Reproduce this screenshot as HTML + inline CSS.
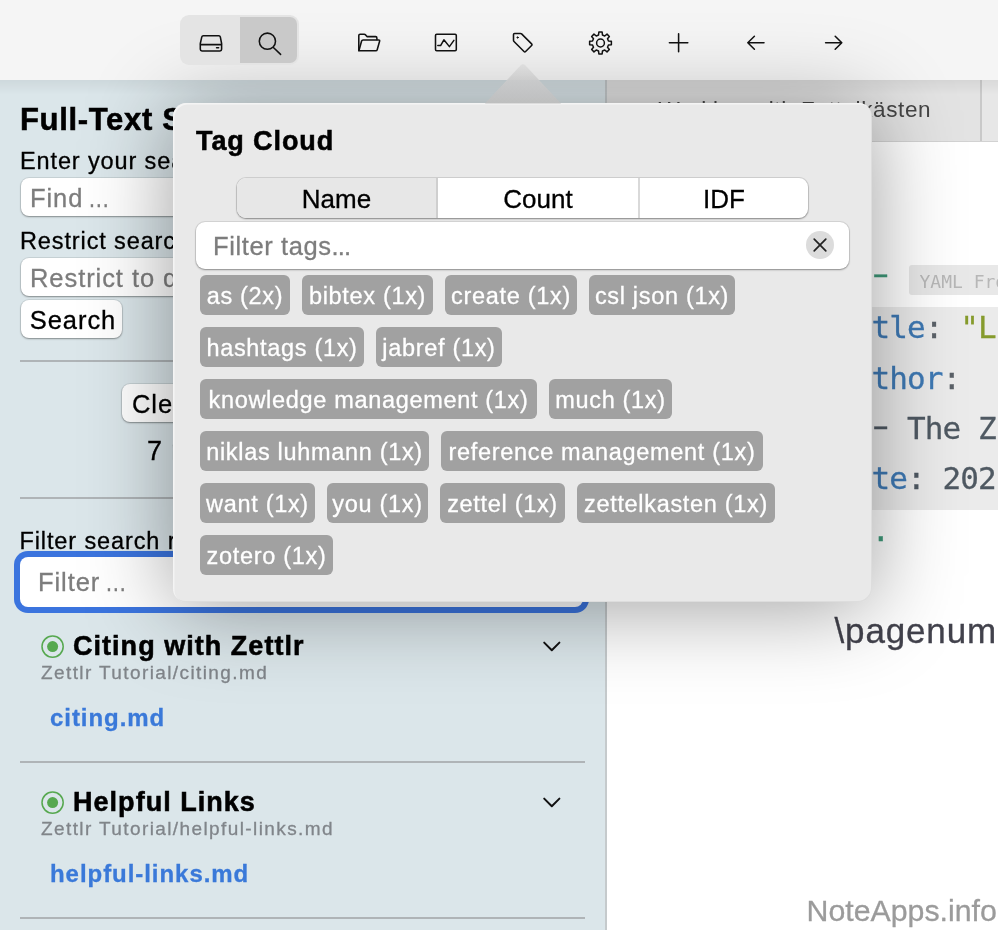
<!DOCTYPE html>
<html lang="en">
<head>
<meta charset="utf-8">
<title>Zettlr – Tag Cloud</title>
<style>
*{box-sizing:border-box;margin:0;padding:0}
html,body{width:998px;height:930px;overflow:hidden;background:#fff}
body{position:relative;-webkit-text-stroke:.3px;font-family:"Liberation Sans",sans-serif;color:#000;-webkit-font-smoothing:antialiased}
.abs{position:absolute;white-space:nowrap}
#toolbar,#sidebar,#tabbar,#editor,#pop{will-change:transform}
/* toolbar */
#toolbar{position:absolute;left:0;top:0;width:998px;height:80px;background:#f5f5f5;z-index:12;overflow:hidden}
#tbshadow{position:absolute;left:173px;top:103px;width:698.6px;height:499px;border-radius:13px;box-shadow:0 2px 88px 0 rgba(0,0,0,.29)}
#seg{position:absolute;left:180px;top:15px;width:118.6px;height:50px;border-radius:9px;background:#e4e4e4;overflow:hidden}
#seg .on{position:absolute;left:60px;top:2px;width:56.8px;height:46px;background:#c9c9c9;border-radius:0 7px 7px 0}
.ico{position:absolute;overflow:visible}
/* sidebar */
#sidebar{position:absolute;left:0;top:80px;width:607px;height:850px;background:#dbe6ea;border-right:2px solid #c5cacc}
#sideshadow{position:absolute;left:0;top:80px;width:998px;height:14px;background:linear-gradient(rgba(0,0,0,.06),rgba(0,0,0,0));z-index:4}
.inp{position:absolute;background:#fff;border-radius:8px;box-shadow:0 1px 2px rgba(0,0,0,.35),0 0 0 1px rgba(0,0,0,.08);color:#7d7d7d;font-size:25.5px;letter-spacing:.93px;white-space:nowrap;overflow:hidden}
.btn{position:absolute;background:#fff;border-radius:8px;box-shadow:0 1px 2px rgba(0,0,0,.35),0 0 0 1px rgba(0,0,0,.08);color:#000;font-size:25.5px;letter-spacing:.93px;white-space:nowrap;overflow:hidden}
.el{display:inline-block;transform:scaleX(.85);transform-origin:0 50%;margin-left:-3px}
.hr{position:absolute;height:2px;background:#afb4b7}
.lbl{position:absolute;font-size:23.5px;letter-spacing:.88px;white-space:nowrap}
.h1{position:absolute;-webkit-text-stroke:.55px;font-weight:bold;font-size:31px;letter-spacing:.67px;white-space:nowrap}
.res-t{position:absolute;-webkit-text-stroke:.55px;font-weight:bold;font-size:27px;letter-spacing:1.03px;white-space:nowrap}
.res-p{position:absolute;font-size:19px;letter-spacing:1.4px;color:#80858a;white-space:nowrap}
.res-f{position:absolute;font-weight:bold;font-size:24px;letter-spacing:.95px;color:#3a79d9;white-space:nowrap}
/* editor */
#tabbar{position:absolute;left:607px;top:80px;width:391px;height:62px;background:#e3e3e3;border-bottom:1.5px solid #d2d2d2}
#tabbar .r{position:absolute;left:373px;top:0;width:18px;height:61px;background:#e7e7e7;border-left:2px solid #c9c9c9}
#editor{position:absolute;left:607px;top:142px;width:391px;height:788px;background:#fff}
#editor .in{position:absolute;left:1px;top:0;width:390px;height:788px}
.mono{position:absolute;font-family:"DejaVu Sans Mono","Liberation Mono",monospace;font-size:31px;letter-spacing:-.9px;line-height:40px;white-space:pre;max-width:160px;overflow:hidden}
.dash{display:inline-block;transform:translate(-1px,-3.2px) scaleX(1.6);transform-origin:50% 50%}
/* popover */
#pop{position:absolute;left:173px;top:103px;width:698.6px;height:499px;background:#e9e9e9;border-radius:13.5px;box-shadow:inset 1.5px 1.5px 0 rgba(245,245,245,.9),inset -1px -1px 0 rgba(0,0,0,.05),0 5px 88px 0 rgba(0,0,0,.39);z-index:10}
#arrow{position:absolute;z-index:13}
.tag{position:absolute;height:40px;border-radius:6px;background:#a1a1a1;color:#fff;font-size:23.5px;letter-spacing:.68px;line-height:43px;text-align:center;white-space:nowrap}
</style>
</head>
<body>

<div id="toolbar">
  <div id="tbshadow"></div>
  <div id="seg"><div class="on"></div></div>
  <svg class="ico" style="left:0;top:0" width="998" height="80" viewBox="0 0 998 80" fill="none" stroke="#111" stroke-width="1.55" stroke-linecap="round" stroke-linejoin="round">
    <!-- drive -->
    <path d="M203.3 35.8 H218.9 Q220 35.8 220.3 36.9 L221.6 43.5 V49.3 Q221.6 50.9 220 50.9 H202 Q200.3 50.9 200.3 49.3 V43.5 L201.8 36.9 Q202.1 35.8 203.3 35.8Z"/>
    <path d="M200.8 44.6 H221.2" stroke-width="1.9"/>
    <path d="M216.6 47.8 H218.6" stroke-width="1.6"/>
    <!-- search -->
    <circle cx="267.4" cy="41.2" r="8.1"/>
    <path d="M273.4 47.5 L280.6 54.4"/>
    <!-- folder -->
    <path d="M358.8 50.6 V35.6 Q358.8 34.3 360.1 34.3 H364.2 Q365 34.3 365.6 34.9 L367 36.6 H375.6 Q376.9 36.6 376.9 37.9 V39.6"/>
    <path d="M358.9 50.7 L361.6 41 Q361.9 39.9 363.1 39.9 H378.6 Q380 39.9 379.6 41.2 L377.2 49.7 Q376.9 50.8 375.7 50.8 H359.4"/>
    <!-- chart -->
    <rect x="435.5" y="34.2" width="20.8" height="16.6" rx="1.2"/>
    <path d="M437.8 45.6 H440.6 L443.9 39.8 L449.4 46.6 L453.9 40.4" stroke-width="1.5"/>
    <!-- tag -->
    <path d="M514.6 33.4 H520.4 Q521.1 33.4 521.6 33.9 L531.6 43.9 Q532.4 44.7 531.6 45.5 L525.6 51.5 Q524.8 52.3 524 51.5 L514 41.5 Q513.5 41 513.5 40.3 V34.5 Q513.5 33.4 514.6 33.4Z"/>
    <circle cx="517.6" cy="37.5" r="0.7" fill="#111" stroke-width="0.8"/>
    <!-- gear -->
    <path d="M598.55 35.04 L598.86 32.12 L602.14 32.12 L602.45 35.04 L604.75 35.99 L607.03 34.15 L609.35 36.47 L607.51 38.75 L608.46 41.05 L611.38 41.36 L611.38 44.64 L608.46 44.95 L607.51 47.25 L609.35 49.53 L607.03 51.85 L604.75 50.01 L602.45 50.96 L602.14 53.88 L598.86 53.88 L598.55 50.96 L596.25 50.01 L593.97 51.85 L591.65 49.53 L593.49 47.25 L592.54 44.95 L589.62 44.64 L589.62 41.36 L592.54 41.05 L593.49 38.75 L591.65 36.47 L593.97 34.15 L596.25 35.99Z" stroke-width="1.5"/>
    <circle cx="600.5" cy="43" r="3.9" stroke-width="1.5"/>
    <!-- plus -->
    <path d="M669.4 42.8 H687.8 M678.6 33.8 V51.8"/>
    <!-- arrows -->
    <path d="M747.8 42.7 H764 M754.4 36.2 L747.8 42.7 L754.4 49.3"/>
    <path d="M825.6 42.7 H841.8 M835.2 36.2 L841.8 42.7 L835.2 49.3"/>
  </svg>
</div>

<div id="sidebar">
  <div class="h1" style="left:20px;top:22px;line-height:36px">Full-Text Search</div>
  <div class="lbl" style="left:20px;top:66px;line-height:30px">Enter your search terms below</div>
  <div class="inp" style="left:21px;top:98px;width:564px;height:38px;line-height:40px;padding-left:9px">Find <span class="el">…</span></div>
  <div class="lbl" style="left:20px;top:146px;line-height:30px">Restrict search to directory</div>
  <div class="inp" style="left:21px;top:178px;width:564px;height:38px;line-height:40px;padding-left:9px">Restrict to directory <span class="el">…</span></div>
  <div class="btn" style="left:21px;top:220px;padding-left:3px;width:101px;height:38px;line-height:40px;text-align:center">Search</div>
  <div class="hr" style="left:20px;top:280px;width:565px"></div>
  <div class="btn" style="left:122px;top:304px;width:170px;height:38px;line-height:40px;padding-left:10px">Clear search</div>
  <div class="lbl" style="left:147px;top:354px;line-height:34px;font-size:27px">7 matches</div>
  <div class="hr" style="left:20px;top:417px;width:565px"></div>
  <div class="lbl" style="left:19.5px;top:446px;line-height:30px">Filter search results</div>
  <div class="inp" style="left:20px;top:477px;width:563px;height:49.5px;line-height:50px;padding-left:18px;box-shadow:0 0 0 6px #3b74de;border-radius:8px">Filter <span class="el">…</span></div>

  <svg class="ico" style="left:40px;top:554px" width="26" height="26" viewBox="0 0 26 26"><circle cx="12.6" cy="12.6" r="10.6" fill="none" stroke="#56a84f" stroke-width="1.5"/><circle cx="12.6" cy="12.6" r="5.5" fill="#56a84f"/></svg>
  <div class="res-t" style="left:73px;top:549px;line-height:34px">Citing with Zettlr</div>
  <svg class="ico" style="left:541px;top:558px" width="20" height="16" viewBox="0 0 20 16" fill="none" stroke="#111" stroke-width="2" stroke-linecap="round" stroke-linejoin="round"><path d="M3.2 4.6 L10.8 12.2 L18.4 4.6"/></svg>
  <div class="res-p" style="left:41px;top:581px;line-height:24px">Zettlr Tutorial/citing.md</div>
  <div class="res-f" style="left:50px;top:623px;line-height:30px">citing.md</div>
  <div class="hr" style="left:20px;top:681px;width:565px"></div>

  <svg class="ico" style="left:40px;top:710px" width="26" height="26" viewBox="0 0 26 26"><circle cx="12.6" cy="12.6" r="10.6" fill="none" stroke="#56a84f" stroke-width="1.5"/><circle cx="12.6" cy="12.6" r="5.5" fill="#56a84f"/></svg>
  <div class="res-t" style="left:73px;top:705px;line-height:34px">Helpful Links</div>
  <svg class="ico" style="left:541px;top:714px" width="20" height="16" viewBox="0 0 20 16" fill="none" stroke="#111" stroke-width="2" stroke-linecap="round" stroke-linejoin="round"><path d="M3.2 4.6 L10.8 12.2 L18.4 4.6"/></svg>
  <div class="res-p" style="left:41px;top:737px;line-height:24px">Zettlr Tutorial/helpful-links.md</div>
  <div class="res-f" style="left:50px;top:779px;line-height:30px">helpful-links.md</div>
  <div class="hr" style="left:20px;top:837px;width:565px"></div>
</div>
<div id="sideshadow"></div>

<div id="tabbar"><div class="abs" style="left:51.5px;top:15px;font-size:22.5px;letter-spacing:.62px;-webkit-text-stroke:0;line-height:30px;color:#454545">Working with Zettelkästen</div><div class="r"></div></div>
<div id="editor"><div class="in">
  <div class="abs" style="left:-1px;top:165px;width:391px;height:202.5px;background:#ebebeb"></div>
  <div class="abs" style="left:301px;top:123px;width:90px;height:29.5px;background:#e8e8e8;border-radius:3px 0 0 3px"></div>
  <div class="mono" style="left:311.5px;top:128px;font-size:18px;letter-spacing:0;-webkit-text-stroke:0;line-height:24px;color:#b7b7b7">YAML Frontmatter</div>
  <div class="mono" style="left:228px;top:114.3px;color:#3f9a7a">--<span class="dash">-</span></div>
  <div class="mono" style="left:228px;top:165.1px;color:#5b6168"><span style="color:#3e79b4">title</span>: <span style="color:#869b2d">"Lorem Ipsum"</span></div>
  <div class="mono" style="left:228px;top:215.9px;color:#5b6168"><span style="color:#3e79b4">author</span>:</div>
  <div class="mono" style="left:228px;top:265.6px;color:#4f5962">  <span class="dash">-</span> The Zettlr Team</div>
  <div class="mono" style="left:228px;top:316.3px;color:#4f5962"><span style="color:#3e79b4">date</span>: 2021-01-01</div>
  <div class="mono" style="left:228px;top:367.5px;color:#3f9a7a">...</div>
  <div class="abs" style="left:226.5px;top:466.5px;font-size:35px;letter-spacing:.85px;line-height:44px;color:#42424c">\pagenumbering</div>
  <div class="abs" style="left:198.5px;top:749px;font-size:30.3px;line-height:40px;color:#9b9b9b">NoteApps.info</div>
</div></div>

<svg id="arrow" style="left:480px;top:59.5px" width="86" height="44" viewBox="0 0 86 44"><defs><linearGradient id="ag" x1="0" y1="0" x2="0" y2="1"><stop offset="0" stop-color="#dcdcdc"/><stop offset=".4" stop-color="#cbcbcb"/><stop offset="1" stop-color="#bebebe"/></linearGradient></defs><path d="M5 43.5 L40.6 5.4 Q43 3 45.4 5.4 L81 43.5Z" fill="url(#ag)" fill-opacity=".9"/></svg>
<div id="pop"><div style="position:absolute;left:2px;top:0">
  <div class="abs" style="left:21px;top:21px;font-size:27px;letter-spacing:.9px;-webkit-text-stroke:.55px;font-weight:bold;line-height:34px">Tag Cloud</div>
  <div class="abs" id="segc" style="left:62px;top:75px;width:571px;height:40px;border-radius:9px;background:#fff;box-shadow:0 1px 2px rgba(0,0,0,.35),0 0 0 1px rgba(0,0,0,.10);overflow:hidden;font-size:26px;line-height:42px;text-align:center">
    <div class="abs" style="left:0;top:0;width:201px;height:40px;background:#e7e7e7;border-right:2px solid #cfcfcf">Name</div>
    <div class="abs" style="left:201px;top:0;width:202px;height:40px;border-right:2px solid #d9d9d9">Count</div>
    <div class="abs" style="left:403px;top:0;width:168px;height:40px">IDF</div>
  </div>
  <div class="inp" style="left:21px;top:118.5px;width:652.5px;height:47px;line-height:48px;padding-left:17px;font-size:25.5px;letter-spacing:.6px;border-radius:9px">Filter tags<span style="letter-spacing:-.9px">...</span></div>
  <svg class="ico" style="left:629.8px;top:126.8px" width="30" height="30" viewBox="0 0 30 30"><circle cx="15" cy="15" r="14" fill="#dcdcdc"/><path d="M9.2 9.2 L20.8 20.8 M20.8 9.2 L9.2 20.8" stroke="#222" stroke-width="1.7" stroke-linecap="round"/></svg>
  <div class="tag" style="left:25px;top:172px;width:90px">as (2x)</div>
  <div class="tag" style="left:127px;top:172px;width:131px">bibtex (1x)</div>
  <div class="tag" style="left:270px;top:172px;width:132px">create (1x)</div>
  <div class="tag" style="left:414px;top:172px;width:146px">csl json (1x)</div>
  <div class="tag" style="left:25px;top:224px;width:164px">hashtags (1x)</div>
  <div class="tag" style="left:201px;top:224px;width:126px">jabref (1x)</div>
  <div class="tag" style="left:25px;top:276px;width:337px">knowledge management (1x)</div>
  <div class="tag" style="left:374px;top:276px;width:123px">much (1x)</div>
  <div class="tag" style="left:25px;top:328px;width:229px">niklas luhmann (1x)</div>
  <div class="tag" style="left:266px;top:328px;width:322px">reference management (1x)</div>
  <div class="tag" style="left:25px;top:380px;width:115px">want (1x)</div>
  <div class="tag" style="left:152px;top:380px;width:101px">you (1x)</div>
  <div class="tag" style="left:265px;top:380px;width:125px">zettel (1x)</div>
  <div class="tag" style="left:402px;top:380px;width:198px">zettelkasten (1x)</div>
  <div class="tag" style="left:25px;top:432px;width:133px">zotero (1x)</div>
</div></div>

</body>
</html>
